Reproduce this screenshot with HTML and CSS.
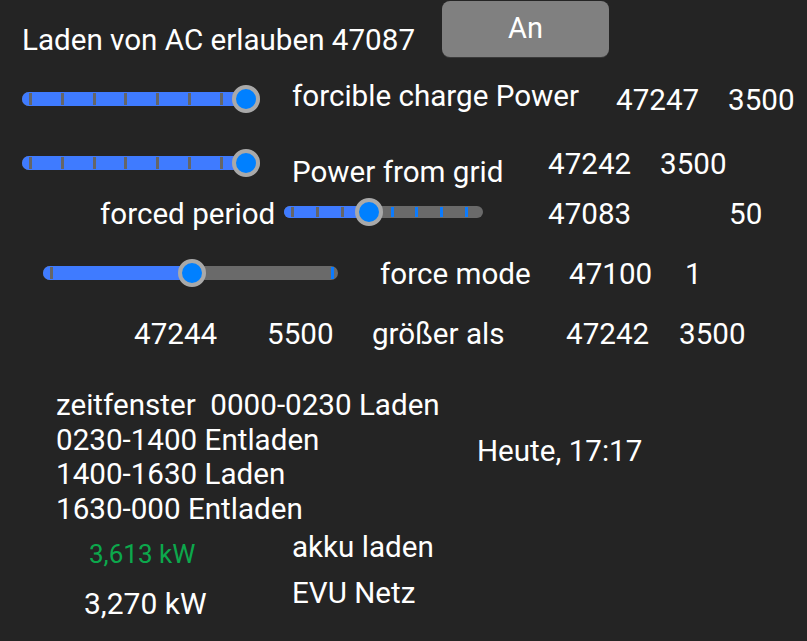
FILE: index.html
```html
<!DOCTYPE html>
<html lang="de">
<head>
    <meta charset="UTF-8">
    <title>Akku Steuerung</title>
    <link rel="stylesheet" href="styles.css">
</head>
<body>
    <div class="view">
        <!-- Kopfzeile -->
        <div class="w txt title">Laden von AC erlauben 47087</div>
        <div class="w btn-an">An</div>

        <!-- forcible charge power -->
        <div class="w slider s-charge">
            <div class="track"></div>
            <div class="fill" style="width: 224px"></div>
            <i class="tick" style="left: 7px"></i>
            <i class="tick" style="left: 39px"></i>
            <i class="tick" style="left: 71px"></i>
            <i class="tick" style="left: 102px"></i>
            <i class="tick" style="left: 134px"></i>
            <i class="tick" style="left: 166px"></i>
            <i class="tick" style="left: 198px"></i>
            <div class="knob" style="left: 210px"></div>
        </div>
        <div class="w txt l-charge">forcible charge Power</div>
        <div class="w txt n-charge-id">47247</div>
        <div class="w txt n-charge-val">3500</div>

        <!-- power from grid -->
        <div class="w slider s-grid">
            <div class="track"></div>
            <div class="fill" style="width: 224px"></div>
            <i class="tick" style="left: 7px"></i>
            <i class="tick" style="left: 39px"></i>
            <i class="tick" style="left: 71px"></i>
            <i class="tick" style="left: 102px"></i>
            <i class="tick" style="left: 134px"></i>
            <i class="tick" style="left: 166px"></i>
            <i class="tick" style="left: 198px"></i>
            <div class="knob" style="left: 210px"></div>
        </div>
        <div class="w txt l-grid">Power from grid</div>
        <div class="w txt n-grid-id">47242</div>
        <div class="w txt n-grid-val">3500</div>

        <!-- forced period -->
        <div class="w txt l-period">forced period</div>
        <div class="w slider thin s-period">
            <div class="track"></div>
            <div class="fill" style="width: 85px"></div>
            <i class="tick" style="left: 7px"></i>
            <i class="tick" style="left: 32px"></i>
            <i class="tick" style="left: 57px"></i>
            <i class="tick on" style="left: 107px"></i>
            <i class="tick on" style="left: 131px"></i>
            <i class="tick on" style="left: 156px"></i>
            <i class="tick on" style="left: 181px"></i>
            <div class="knob" style="left: 71px"></div>
        </div>
        <div class="w txt n-period-id">47083</div>
        <div class="w txt n-period-val">50</div>

        <!-- force mode -->
        <div class="w slider s-mode">
            <div class="track"></div>
            <div class="fill" style="width: 149px"></div>
            <i class="tick" style="left: 7px"></i>
            <i class="tick on" style="left: 288px"></i>
            <div class="knob" style="left: 135px"></div>
        </div>
        <div class="w txt l-mode">force mode</div>
        <div class="w txt n-mode-id">47100</div>
        <div class="w txt n-mode-val">1</div>

        <!-- Schwelle -->
        <div class="w txt n-lim-id">47244</div>
        <div class="w txt n-lim-val">5500</div>
        <div class="w txt l-lim">größer als</div>
        <div class="w txt n-lim2-id">47242</div>
        <div class="w txt n-lim2-val">3500</div>

        <!-- Zeitfenster -->
        <div class="w txt zeitfenster">
            zeitfenster&nbsp; 0000-0230 Laden<br>
            0230-1400 Entladen<br>
            1400-1630 Laden<br>
            1630-000 Entladen
        </div>
        <div class="w txt heute">Heute, 17:17</div>

        <div class="w txt akku-val">3,613 kW</div>
        <div class="w txt akku-lbl">akku laden</div>
        <div class="w txt evu-val">3,270 kW</div>
        <div class="w txt evu-lbl">EVU Netz</div>
    </div>
</body>
</html>
```

FILE: styles.css
```css
html, body {
    margin: 0;
    padding: 0;
    background-color: #242424;
}

body {
    font-family: Roboto, "Noto Sans", sans-serif;
    color: #ffffff;
}

/* freie Zeichenfläche wie in vis */
.view {
    position: relative;
    width: 807px;
    height: 641px;
    overflow: hidden;
}

.w {
    position: absolute;
}

.txt {
    font-size: 29.6px;
    line-height: 29.6px;
    white-space: nowrap;
}

/* Button */
.btn-an {
    left: 442px;
    top: 1px;
    width: 167px;
    height: 56px;
    line-height: 54px;
    font-size: 29px;
    text-align: center;
    background-color: #808080;
    border-radius: 8px;
    box-shadow: 0 1px 0 #3a3a3a;
}

/* Slider */
.slider {
    height: 28px;
}

.slider .track,
.slider .fill {
    position: absolute;
    left: 0;
    top: 7px;
    height: 14px;
    border-radius: 7px;
}

.slider .track {
    right: 0;
    background-color: #6a6a6a;
}

.slider .fill {
    background-color: #3f7bff;
    border-radius: 7px 0 0 7px;
}

.slider .tick {
    position: absolute;
    top: 8px;
    width: 3px;
    height: 12px;
    background-color: #666666;
}

.slider .tick.on {
    background-color: #0a7bff;
}

.slider .knob {
    position: absolute;
    top: 0;
    width: 28px;
    height: 28px;
    box-sizing: border-box;
    border-radius: 50%;
    border: 4px solid #a9a9a9;
    background-color: #0080ff;
}

.slider.thin .track,
.slider.thin .fill {
    top: 8px;
    height: 12px;
    border-radius: 6px;
}

.slider.thin .fill {
    border-radius: 6px 0 0 6px;
}

.slider.thin .tick {
    top: 9px;
    height: 10px;
}

.s-charge { left: 22px;  top: 85px;  width: 238px; }
.s-grid   { left: 22px;  top: 149px; width: 238px; }
.s-period { left: 284px; top: 198px; width: 199px; }
.s-mode   { left: 43px;  top: 259px; width: 295px; }

/* Texte */
.title       { left: 22px;  top: 26px; }

.l-charge    { left: 292px; top: 82px; }
.n-charge-id { left: 616px; top: 86px; }
.n-charge-val{ left: 728px; top: 86px; }

.l-grid      { left: 292px; top: 158px; }
.n-grid-id   { left: 548px; top: 150px; }
.n-grid-val  { left: 660px; top: 150px; }

.l-period    { left: 100px; top: 200px; }
.n-period-id { left: 548px; top: 200px; }
.n-period-val{ left: 729px; top: 200px; }

.l-mode      { left: 380px; top: 260px; }
.n-mode-id   { left: 569px; top: 260px; }
.n-mode-val  { left: 685px; top: 260px; }

.n-lim-id    { left: 134px; top: 320px; }
.n-lim-val   { left: 267px; top: 320px; }
.l-lim       { left: 372px; top: 320px; }
.n-lim2-id   { left: 566px; top: 320px; }
.n-lim2-val  { left: 679px; top: 320px; }

.zeitfenster {
    left: 56px;
    top: 388px;
    line-height: 34.7px;
}

.heute       { left: 477px; top: 437px; }

.akku-val {
    left: 89px;
    top: 541px;
    font-size: 26px;
    line-height: 26px;
    color: #0ca84c;
}

.akku-lbl    { left: 292px; top: 533px; }

.evu-val {
    left: 84px;
    top: 589px;
    font-size: 30px;
    line-height: 30px;
}

.evu-lbl     { left: 292px; top: 579px; }
```
